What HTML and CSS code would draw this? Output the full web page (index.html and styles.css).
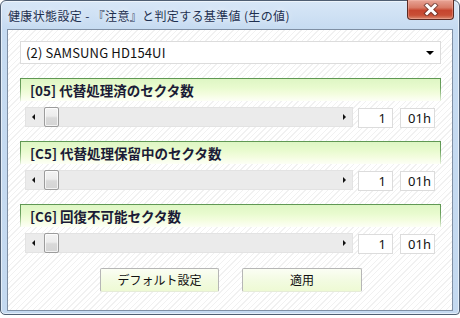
FILE: index.html
```html
<!DOCTYPE html>
<html lang="ja">
<head>
<meta charset="utf-8">
<title>健康状態設定</title>
<link rel="stylesheet" href="styles.css">
</head>
<body>
<div class="window">
  <div class="titlebar">
    <span class="title">健康状態設定 - 『注意』と判定する基準値 (生の値)</span>
    <div class="close">
      <svg width="20" height="13" viewBox="0 0 20 13">
        <path d="M6 2.5 L14 10.5 M14 2.5 L6 10.5" stroke="#4a2a26" stroke-width="5" stroke-linecap="square" fill="none" opacity="0.6"/>
        <path d="M6 2.5 L14 10.5 M14 2.5 L6 10.5" stroke="#ffffff" stroke-width="3" stroke-linecap="square" fill="none"/>
      </svg>
    </div>
  </div>
  <div class="client">
    <div class="combo">
      <span class="combo-text">(2) SAMSUNG HD154UI</span>
      <span class="combo-arrow"></span>
    </div>

    <div class="section">
      <div class="header">[05] 代替処理済のセクタ数</div>
      <div class="row">
        <div class="scroll">
          <span class="arr arr-left"></span>
          <span class="thumb"></span>
          <span class="arr arr-right"></span>
        </div>
        <div class="val dec">1</div>
        <div class="val hex">01h</div>
      </div>
    </div>

    <div class="section">
      <div class="header">[C5] 代替処理保留中のセクタ数</div>
      <div class="row">
        <div class="scroll">
          <span class="arr arr-left"></span>
          <span class="thumb"></span>
          <span class="arr arr-right"></span>
        </div>
        <div class="val dec">1</div>
        <div class="val hex">01h</div>
      </div>
    </div>

    <div class="section">
      <div class="header">[C6] 回復不可能セクタ数</div>
      <div class="row">
        <div class="scroll">
          <span class="arr arr-left"></span>
          <span class="thumb"></span>
          <span class="arr arr-right"></span>
        </div>
        <div class="val dec">1</div>
        <div class="val hex">01h</div>
      </div>
    </div>

    <div class="buttons">
      <div class="btn btn-default">デフォルト設定</div>
      <div class="btn btn-apply">適用</div>
    </div>
  </div>
</div>
</body>
</html>
```

FILE: styles.css
```css
* { box-sizing: border-box; }

html, body {
  margin: 0;
  padding: 0;
  background: #ffffff;
}

body {
  width: 460px;
  height: 318px;
  overflow: hidden;
  font-family: "Noto Sans CJK JP", "Noto Sans", sans-serif;
}

.window {
  width: 460px;
  height: 315px;
  border: 1px solid #4f5e72;
  border-radius: 6px 6px 4px 5px;
  background: linear-gradient(#d8e7f7 0px, #c6dbf1 28px, #c4d9f0 100%);
  box-shadow: inset 0 0 0 1px rgba(255, 255, 255, 0.55);
  display: flex;
  flex-direction: column;
}

.titlebar {
  height: 28px;
  display: flex;
  align-items: flex-start;
  padding-left: 7px;
}

.title {
  font-size: 12px;
  line-height: 14px;
  margin-top: 8px;
  letter-spacing: 0.35px;
  color: #1e3050;
  text-shadow: 0 0 6px rgba(255, 255, 255, 0.9);
  white-space: nowrap;
}

.close {
  margin-left: auto;
  margin-right: 5px;
  margin-top: -1px;
  width: 47px;
  height: 20px;
  border: 1px solid #5b2b24;
  border-top: none;
  border-radius: 0 0 4px 4px;
  background: linear-gradient(#e8a597 0%, #d87a66 40%, #c6452e 55%, #c94f36 80%, #da8a70 100%);
  box-shadow: inset 0 0 0 1px rgba(255, 200, 190, 0.35);
  display: flex;
  align-items: center;
  justify-content: center;
}

.close svg { display: block; }

.client {
  flex: 1;
  margin: 0 6px 3px 6px;
  border: 1px solid #7f8fa4;
  background-color: #ffffff;
  background-image: repeating-linear-gradient(135deg, #ffffff 0px, #ffffff 3px, #f1f1f1 3px, #f1f1f1 4px);
  padding: 11px 11px 0 12px;
  display: flex;
  flex-direction: column;
}

.combo {
  height: 23px;
  border: 1px solid #dcdcdc;
  background: #ffffff;
  display: flex;
  align-items: center;
  padding: 0 6px 0 5px;
}

.combo-text {
  font-size: 13px;
  letter-spacing: 0.15px;
  color: #111111;
}

.combo-arrow {
  margin-left: auto;
  width: 0;
  height: 0;
  border-left: 4px solid transparent;
  border-right: 4px solid transparent;
  border-top: 4px solid #000000;
  margin-top: 1px;
}

.section {
  margin-top: 14px;
}

.header {
  height: 23px;
  border-style: solid;
  border-width: 1px 1px 0 1px;
  border-image: linear-gradient(#5f9853, #6aa05e 40%, rgba(140, 190, 130, 0.1)) 1;
  background: linear-gradient(#def6c4 0%, #e9fbcf 40%, #f4fde0 70%, #fdfff6 100%);
  padding-left: 9px;
  font-size: 13.5px;
  font-weight: bold;
  line-height: 22px;
  color: #1b1b36;
  white-space: nowrap;
}

.row {
  margin-top: 6px;
  margin-left: 5px;
  height: 20px;
  display: flex;
  align-items: stretch;
}

.scroll {
  width: 328px;
  height: 20px;
  background: #ebebeb;
  border: 1px solid #e3e3e3;
  display: flex;
  align-items: center;
}

.arr {
  width: 0;
  height: 0;
  border-top: 3px solid transparent;
  border-bottom: 3px solid transparent;
}

.arr-left {
  border-right: 3px solid #111111;
  margin-left: 6px;
}

.arr-right {
  border-left: 3px solid #111111;
  margin-left: auto;
  margin-right: 6px;
}

.thumb {
  width: 15px;
  height: 20px;
  margin-top: -1px;
  margin-bottom: -1px;
  margin-left: 9px;
  border: 1px solid #9c9c9c;
  border-radius: 2px;
  background: linear-gradient(#f4f4f4 0%, #ececec 45%, #d9d9d9 55%, #d4d4d4 100%);
  box-shadow: inset 0 0 0 1px rgba(255, 255, 255, 0.7);
}

.val {
  width: 35px;
  height: 20px;
  margin-top: 1px;
  border: 1px solid #dcdcdc;
  background: #ffffff;
  font-family: "Noto Sans", sans-serif;
  font-size: 13px;
  line-height: 18px;
  text-align: right;
  color: #111111;
}

.dec {
  margin-left: 5px;
  padding-right: 6px;
}

.hex {
  margin-left: 7px;
  padding-right: 3px;
}

.buttons {
  margin-top: 15px;
  display: flex;
  justify-content: center;
  gap: 23px;
  padding-left: 1px;
}

.btn {
  height: 24px;
  border: 1px solid #b6b6b6;
  border-bottom-color: #e6ecd8;
  border-radius: 2px;
  background: linear-gradient(#fbfef4 0%, #f3fbe2 50%, #eefad4 100%);
  font-size: 12px;
  line-height: 22px;
  text-align: center;
  color: #111111;
}

.btn-default { width: 119px; }
.btn-apply { width: 120px; }
```
